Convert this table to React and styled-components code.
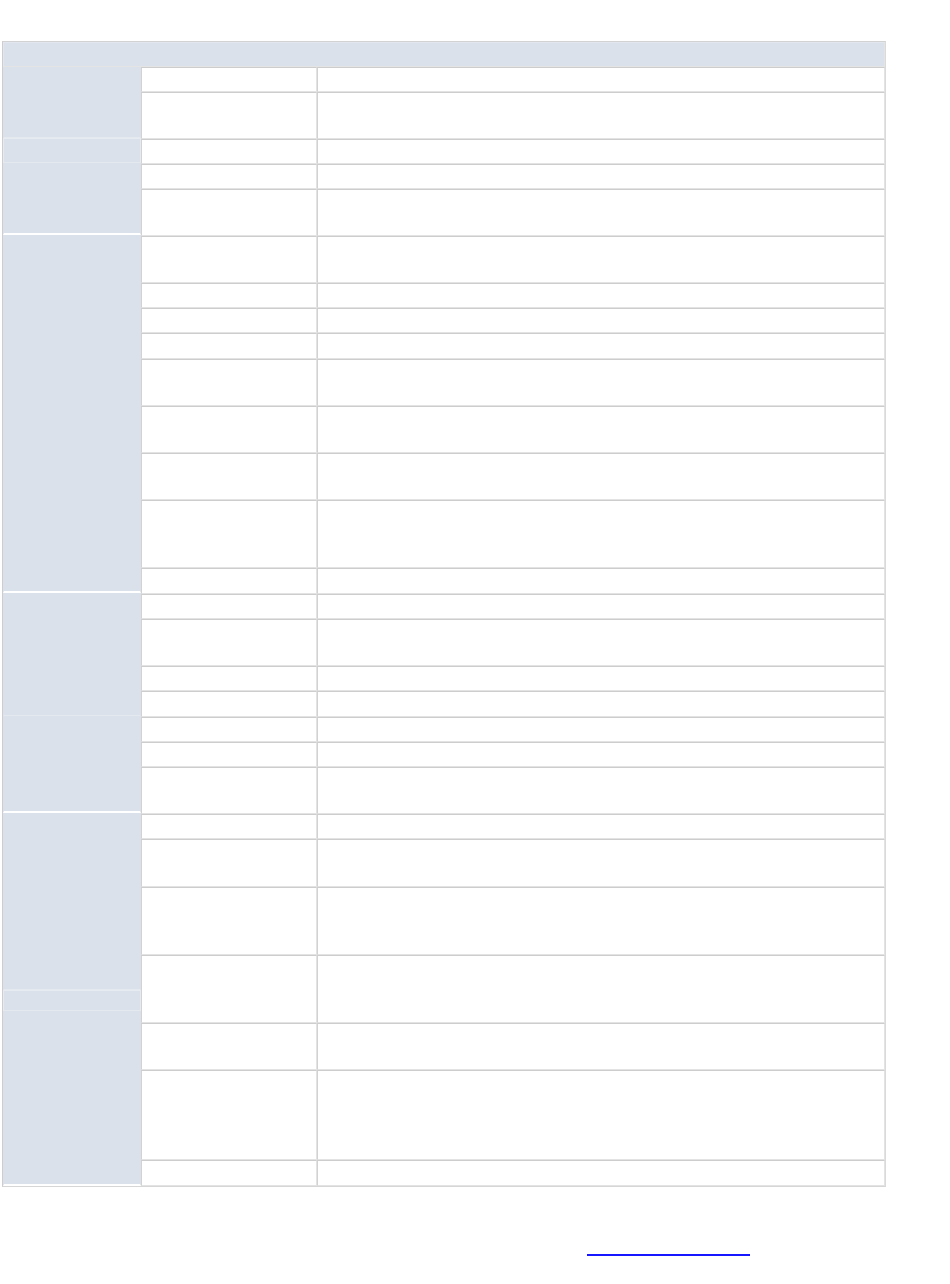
import React from "react"
import styled, { createGlobalStyle } from "styled-components"

const GlobalStyle = createGlobalStyle`
  html, body {
    margin: 0;
    padding: 0;
    background: #ffffff;
    font-family: "Liberation Sans", Arial, sans-serif;
    font-size: 13px;
    color: #333333;
  }
`

const Page = styled.div`
  padding: 41px 0 0 2px;
  width: 950px;
  box-sizing: border-box;
`

const Table = styled.div`
  width: 884px;
  box-sizing: border-box;
  border: 1px solid;
  border-color: #d2d2d2 #dadada #d6d6d6 #cdcdcd;
  background: #ffffff;
`

const HeaderCell = styled.div`
  height: 25px;
  box-sizing: border-box;
  background: #dae1eb;
  border: 1px solid;
  border-color: #e2e7ef #e4e4e4 #e4e4e4 #e2e7ef;
`

const Body = styled.div`
  display: grid;
  grid-template-columns: 138px 1fr;
`

const Side = styled.div`
  display: flex;
  flex-direction: column;
  background: #dae1eb;
`

const Group = styled.div`
  height: ${p => p.$h}px;
  box-sizing: border-box;
  background: #dae1eb;
  border: 1px solid;
  border-color: ${p => (p.$box ? "#e6ebf2" : "#dae1eb")};
  border-bottom: ${p => (p.$white ? "2px solid #ffffff" : "1px solid #e4e9f0")};
`

const Rows = styled.div`
  display: flex;
  flex-direction: column;
`

const Row = styled.div`
  display: grid;
  grid-template-columns: 176px 1fr;
  height: ${p => p.$h}px;
`

const Cell = styled.div`
  box-sizing: border-box;
  border: 1px solid;
  border-color: #cdcdcd #e3e3e3 #e3e3e3 #d2d2d2;
  background: #ffffff;
`

const Footer = styled.div`
  margin-top: 51px;
  padding-left: 585px;
`

const Link = styled.a`
  display: block;
  width: 163px;
  height: 16px;
  border-bottom: 2px solid #1717ff;
  color: #1717ff;
  text-decoration: none;
`

const groups = [
  { h: 71 },
  { h: 25, box: true },
  { h: 72, white: true },
  { h: 358, white: true },
  { h: 123 },
  { h: 97, white: true },
  { h: 177 },
  { h: 21, box: true },
  { h: 175, white: true },
]

const rowHeights = [
  25, 47, 25, 25, 47, 47, 25, 25, 26, 47, 47, 47, 68, 26, 25, 47, 25, 26, 25,
  25, 47, 25, 48, 68, 68, 47, 90, 26,
]

export default function App() {
  return (
    <Page>
      <GlobalStyle />
      <Table>
        <HeaderCell />
        <Body>
          <Side>
            {groups.map((g, i) => (
              <Group key={i} $h={g.h} $box={g.box} $white={g.white} />
            ))}
          </Side>
          <Rows>
            {rowHeights.map((h, i) => (
              <Row key={i} $h={h}>
                <Cell />
                <Cell />
              </Row>
            ))}
          </Rows>
        </Body>
      </Table>
      <Footer>
        <Link href="#">{"\u00a0"}</Link>
      </Footer>
    </Page>
  )
}
